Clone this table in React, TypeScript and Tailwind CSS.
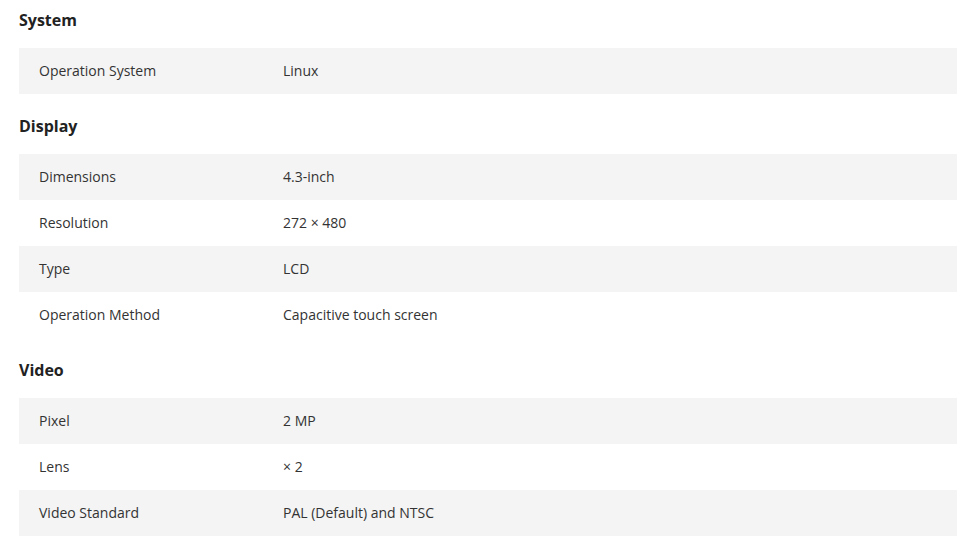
import React from "react";

const sections: { title: string; rows: [string, string][] }[] = [
  { title: "System", rows: [["Operation System", "Linux"]] },
  {
    title: "Display",
    rows: [
      ["Dimensions", "4.3-inch"],
      ["Resolution", "272 × 480"],
      ["Type", "LCD"],
      ["Operation Method", "Capacitive touch screen"],
    ],
  },
  {
    title: "Video",
    rows: [
      ["Pixel", "2 MP"],
      ["Lens", "× 2"],
      ["Video Standard", "PAL (Default) and NTSC"],
    ],
  },
];

export default function App() {
  return (
    <div
      className="w-[976px] h-[545px] bg-white px-[19px] text-[#333333] flex flex-col gap-[12px] overflow-hidden"
      style={{ fontFamily: '"Open Sans", sans-serif' }}
    >
      {sections.map((s) => (
        <div key={s.title} className="flex flex-col">
          <div className="h-[40px] flex items-center text-[16px] font-bold text-[#222222] mb-[8px]">
            {s.title}
          </div>
          {s.rows.map(([k, v], i) => (
            <div
              key={k}
              className={`h-[46px] flex items-center pl-[20px] pb-[2px] text-[14px] ${i % 2 === 0 ? "bg-[#f4f4f4]" : "bg-white"}`}
            >
              <div className="w-[244px]">{k}</div>
              <div>{v}</div>
            </div>
          ))}
        </div>
      ))}
    </div>
  );
}
